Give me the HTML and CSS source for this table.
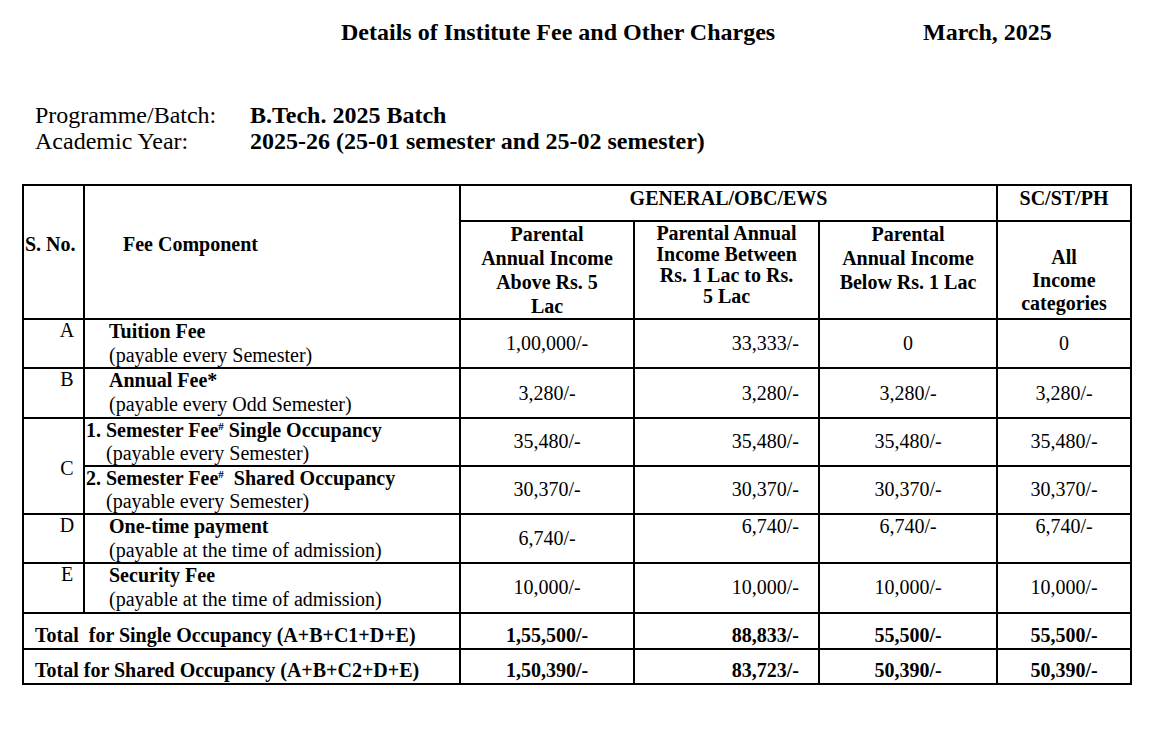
FILE: index.html
```html
<!DOCTYPE html>
<html>
<head>
<meta charset="utf-8">
<link rel="stylesheet" href="styles.css">
</head>
<body>
<div class="page">
  <header class="doc-head">
    <h1 class="title">Details of Institute Fee and Other Charges</h1>
    <div class="date">March, 2025</div>
  </header>
  <div class="info">
    <div class="info-row"><span class="info-label">Programme/Batch:</span><span class="info-value">B.Tech. 2025 Batch</span></div>
    <div class="info-row"><span class="info-label">Academic Year:</span><span class="info-value">2025-26 (25-01 semester and 25-02 semester)</span></div>
  </div>
  <table class="fees">
    <colgroup>
      <col class="c-sno"><col class="c-comp"><col class="c-1"><col class="c-2"><col class="c-3"><col class="c-4">
    </colgroup>
    <thead>
      <tr class="h1">
        <th rowspan="2" class="th-sno">S. No.</th>
        <th rowspan="2" class="th-comp">Fee Component</th>
        <th colspan="3" class="th-group">GENERAL/OBC/EWS</th>
        <th class="th-group">SC/ST/PH</th>
      </tr>
      <tr class="h2">
        <th class="th-cat cat1">Parental<br>Annual Income<br>Above Rs. 5<br>Lac</th>
        <th class="th-cat cat2">Parental Annual<br>Income Between<br>Rs. 1 Lac to Rs.<br>5 Lac</th>
        <th class="th-cat cat3">Parental<br>Annual Income<br>Below Rs. 1 Lac</th>
        <th class="th-cat cat4">All<br>Income<br>categories</th>
      </tr>
    </thead>
    <tbody>
      <tr class="row">
        <td class="sno">A</td>
        <td class="comp"><b>Tuition Fee</b><br>(payable every Semester)</td>
        <td class="v">1,00,000/-</td><td class="v r">33,333/-</td><td class="v">0</td><td class="v">0</td>
      </tr>
      <tr class="row">
        <td class="sno">B</td>
        <td class="comp"><b>Annual Fee*</b><br>(payable every Odd Semester)</td>
        <td class="v">3,280/-</td><td class="v r">3,280/-</td><td class="v">3,280/-</td><td class="v">3,280/-</td>
      </tr>
      <tr class="row">
        <td class="sno sno-c" rowspan="2">C</td>
        <td class="comp sub"><b>1.&nbsp;Semester Fee<sup>#</sup> Single Occupancy</b><br><span class="ind">(payable every Semester)</span></td>
        <td class="v">35,480/-</td><td class="v r">35,480/-</td><td class="v">35,480/-</td><td class="v">35,480/-</td>
      </tr>
      <tr class="row">
        <td class="comp sub"><b>2.&nbsp;Semester Fee<sup>#</sup>&nbsp; Shared Occupancy</b><br><span class="ind">(payable every Semester)</span></td>
        <td class="v">30,370/-</td><td class="v r">30,370/-</td><td class="v">30,370/-</td><td class="v">30,370/-</td>
      </tr>
      <tr class="row">
        <td class="sno">D</td>
        <td class="comp"><b>One-time payment</b><br>(payable at the time of admission)</td>
        <td class="v">6,740/-</td><td class="v r top">6,740/-</td><td class="v top">6,740/-</td><td class="v top">6,740/-</td>
      </tr>
      <tr class="row">
        <td class="sno">E</td>
        <td class="comp"><b>Security Fee</b><br>(payable at the time of admission)</td>
        <td class="v">10,000/-</td><td class="v r">10,000/-</td><td class="v">10,000/-</td><td class="v">10,000/-</td>
      </tr>
      <tr class="total t1">
        <td colspan="2" class="tl">Total&nbsp; for Single Occupancy (A+B+C1+D+E)</td>
        <td class="tv">1,55,500/-</td><td class="tv r">88,833/-</td><td class="tv">55,500/-</td><td class="tv">55,500/-</td>
      </tr>
      <tr class="total t2">
        <td colspan="2" class="tl">Total for Shared Occupancy (A+B+C2+D+E)</td>
        <td class="tv">1,50,390/-</td><td class="tv r">83,723/-</td><td class="tv">50,390/-</td><td class="tv">50,390/-</td>
      </tr>
    </tbody>
  </table>
</div>
</body>
</html>
```

FILE: styles.css
```css
html, body {
  margin: 0;
  padding: 0;
  background: #fff;
}
body {
  font-family: "Liberation Serif", "Times New Roman", serif;
  color: #000;
}
.page {
  width: 1150px;
  height: 739px;
  overflow: hidden;
}
.doc-head {
  display: flex;
  align-items: baseline;
  padding: 19px 0 0 341px;
  height: 31px;
}
.title {
  margin: 0;
  font-size: 24px;
  font-weight: bold;
  width: 582px;
  white-space: nowrap;
}
.date {
  font-size: 24px;
  font-weight: bold;
}
.info {
  padding: 52px 0 0 35px;
  box-sizing: border-box;
  height: 134px;
}
.info-row {
  display: flex;
  font-size: 24px;
  line-height: 26px;
}
.info-label {
  width: 215px;
}
.info-value {
  font-weight: bold;
}
.fees {
  margin-left: 22px;
  border-collapse: collapse;
  width: 1108px;
  table-layout: fixed;
  font-size: 20px;
}
.c-sno { width: 61px; }
.c-comp { width: 376px; }
.c-1 { width: 174px; }
.c-2 { width: 185px; }
.c-3 { width: 178px; }
.c-4 { width: 134px; }
.fees th, .fees td {
  border: 2px solid #000;
  padding: 0;
}
.fees th {
  font-weight: bold;
}
.fees .h1 { height: 36px; }
.fees .h2 { height: 97px; }
.fees .th-sno {
  text-align: left;
  padding: 0 0 16px 1px;
  vertical-align: middle;
}
.fees .th-comp {
  text-align: left;
  padding: 0 0 16px 38px;
  vertical-align: middle;
}
.fees .th-group {
  text-align: center;
  vertical-align: top;
  line-height: 24px;
  padding-top: 0;
}
.fees .th-cat {
  text-align: center;
  vertical-align: top;
  line-height: 24px;
  padding-top: 0;
}
.fees .cat2 { line-height: 21px; padding-top: 1px; }
.fees .cat4 { vertical-align: bottom; line-height: 23px; padding-bottom: 3px; }
.fees .row { height: 47.4px; }
.fees .sno {
  text-align: center;
  vertical-align: top;
  padding: 0 0 0 27px;
  line-height: 21px;
}
.fees .sno-c {
  vertical-align: middle;
  padding-top: 6px;
}
.fees .comp {
  vertical-align: top;
  padding-left: 24px;
  line-height: 23.7px;
}
.fees .comp.sub {
  padding-left: 1px;
  line-height: 23px;
}
.comp .ind {
  padding-left: 20px;
}
sup {
  font-size: 11px;
  line-height: 0;
  vertical-align: 7px;
}
.fees .v {
  text-align: center;
  vertical-align: middle;
}
.fees .v.r, .fees .tv.r {
  text-align: right;
  padding-right: 19px;
}
.fees .v.top {
  vertical-align: top;
  padding-top: 0;
  line-height: 23px;
}
.fees .t1 { height: 36px; }
.fees .t2 { height: 35px; }
.fees .tl {
  font-weight: bold;
  padding-left: 11px;
  vertical-align: bottom;
  padding-bottom: 1px;
  line-height: 24px;
}
.fees .tv {
  font-weight: bold;
  text-align: center;
  vertical-align: bottom;
  padding-bottom: 1px;
  line-height: 24px;
}
```
